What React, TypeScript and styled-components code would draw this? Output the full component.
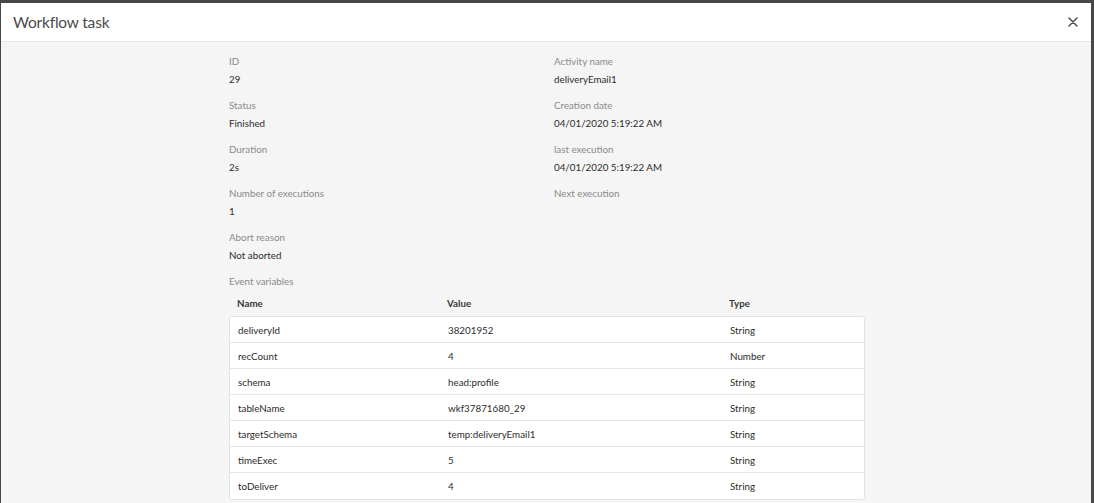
import React from "react";
import styled, { createGlobalStyle } from "styled-components";

const GlobalStyle = createGlobalStyle`
  html, body {
    margin: 0;
    padding: 0;
    height: 100%;
    overflow: hidden;
    background: #474747;
    font-family: Lato, "Open Sans", sans-serif;
  }
`;

const Backdrop = styled.div`
  height: 503px;
  padding: 3px 3px 0 1px;
  box-sizing: border-box;
  overflow: hidden;
`;

const Dialog = styled.div`
  background: #f5f5f5;
  height: 100%;
  display: flex;
  flex-direction: column;
`;

const Header = styled.div`
  height: 38px;
  background: #ffffff;
  border-bottom: 1px solid #e6e6e6;
  display: flex;
  align-items: center;
  justify-content: space-between;
  padding: 0 11px 0 12px;
  flex-shrink: 0;
`;

const Title = styled.h1`
  margin: 0;
  font-size: 15.5px;
  font-weight: 400;
  letter-spacing: -0.2px;
  color: #4b4b4b;
`;

const CloseButton = styled.button`
  border: none;
  background: transparent;
  padding: 0;
  width: 14px;
  height: 14px;
  display: flex;
  align-items: center;
  justify-content: center;
  color: #4b4b4b;
  cursor: pointer;
`;

const Body = styled.div`
  padding: 10px 0 0 228px;
`;

const Content = styled.div`
  width: 636px;
`;

const FieldGrid = styled.div`
  display: grid;
  grid-template-columns: 325px 1fr;
`;

const Field = styled.div`
  margin-bottom: 8px;
`;

const Label = styled.div`
  font-size: 9.8px;
  line-height: 18px;
  height: 18px;
  color: #8a8a8a;
`;

const Value = styled.div`
  font-size: 9.8px;
  line-height: 18px;
  height: 18px;
  color: #2c2c2c;
`;

const TableHead = styled.div`
  display: grid;
  grid-template-columns: 210px 282px 1fr;
  height: 26px;
  align-items: center;
  padding: 0 8px;
  font-size: 9.8px;
  font-weight: 700;
  color: #3a3a3a;
`;

const Table = styled.div`
  background: #ffffff;
  border: 1px solid #e1e1e1;
  border-radius: 3px;
`;

const Row = styled.div<{ last?: boolean }>`
  display: grid;
  grid-template-columns: 210px 282px 1fr;
  height: 26px;
  box-sizing: border-box;
  align-items: center;
  padding: 0 8px;
  font-size: 9.8px;
  color: #2c2c2c;
  border-bottom: ${(p) => (p.last ? "none" : "1px solid #e6e6e6")};
`;

const fields: [string, string][] = [
  ["ID", "29"],
  ["Activity name", "deliveryEmail1"],
  ["Status", "Finished"],
  ["Creation date", "04/01/2020 5:19:22 AM"],
  ["Duration", "2s"],
  ["last execution", "04/01/2020 5:19:22 AM"],
  ["Number of executions", "1"],
  ["Next execution", ""],
  ["Abort reason", "Not aborted"],
];

const variables: [string, string, string][] = [
  ["deliveryId", "38201952", "String"],
  ["recCount", "4", "Number"],
  ["schema", "head:profile", "String"],
  ["tableName", "wkf37871680_29", "String"],
  ["targetSchema", "temp:deliveryEmail1", "String"],
  ["timeExec", "5", "String"],
  ["toDeliver", "4", "String"],
];

export default function App() {
  return (
    <>
      <GlobalStyle />
      <Backdrop>
        <Dialog>
          <Header>
            <Title>Workflow task</Title>
            <CloseButton aria-label="Close">
              <svg width="10" height="10" viewBox="0 0 10 10">
                <path d="M1 1 L9 9 M9 1 L1 9" stroke="currentColor" strokeWidth="1.5" strokeLinecap="round" />
              </svg>
            </CloseButton>
          </Header>
          <Body>
            <Content>
              <FieldGrid>
                {fields.map(([label, value]) => (
                  <Field key={label}>
                    <Label>{label}</Label>
                    <Value>{value}</Value>
                  </Field>
                ))}
              </FieldGrid>
              <Label>Event variables</Label>
              <TableHead>
                <span>Name</span>
                <span>Value</span>
                <span>Type</span>
              </TableHead>
              <Table>
                {variables.map(([name, value, type], i) => (
                  <Row key={name} last={i === variables.length - 1}>
                    <span>{name}</span>
                    <span>{value}</span>
                    <span>{type}</span>
                  </Row>
                ))}
              </Table>
            </Content>
          </Body>
        </Dialog>
      </Backdrop>
    </>
  );
}
